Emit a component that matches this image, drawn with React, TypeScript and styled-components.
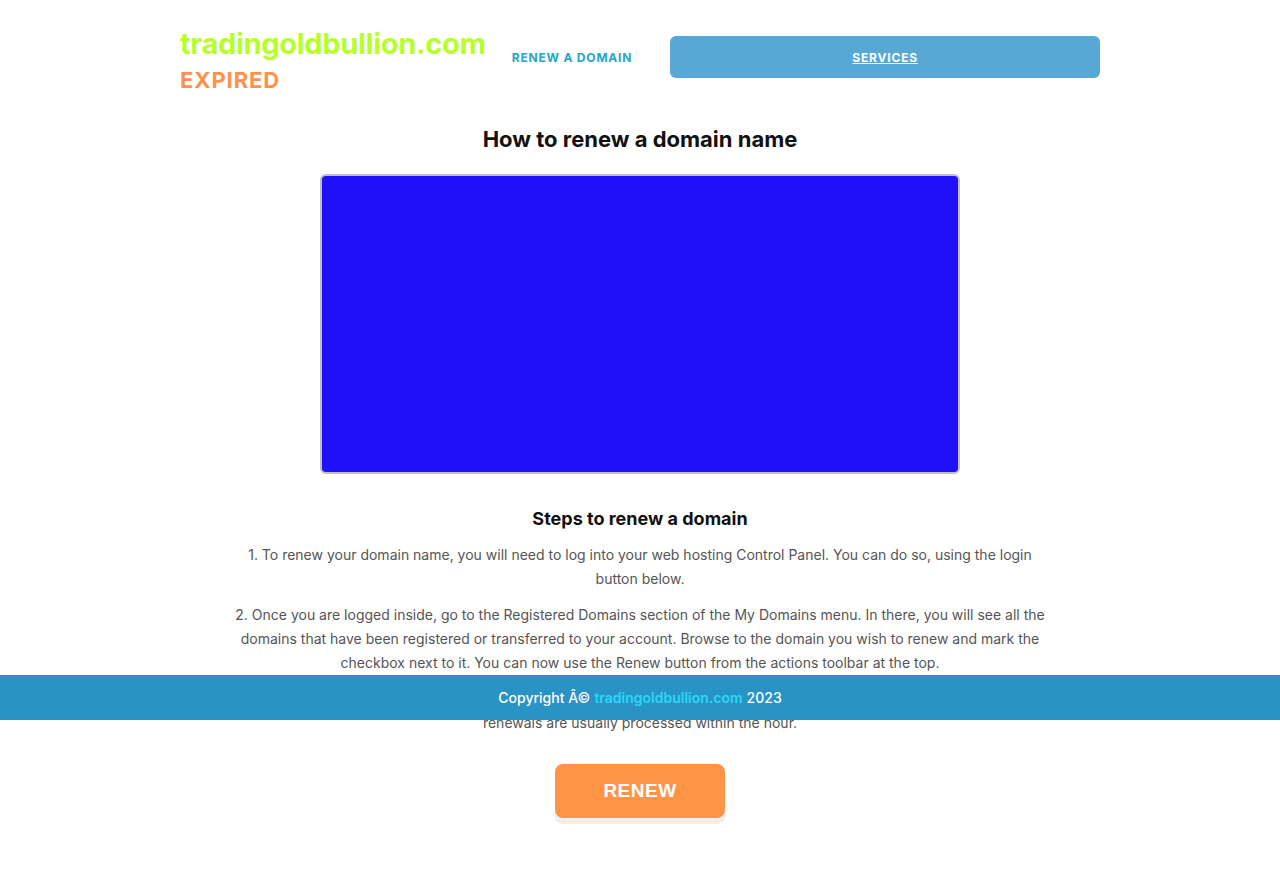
import * as React from "react";
import styled, { createGlobalStyle } from "styled-components";

const GlobalStyles = createGlobalStyle`
  html, body {
    margin: 0;
    padding: 0;
    background: #fff;
    font-family: Inter, "Liberation Sans", sans-serif;
  }
`;

const Page = styled.div`
  position: relative;
  min-height: 888px;
`;

const Header = styled.header`
  width: 920px;
  margin: 0 auto;
  padding-top: 26px;
  display: flex;
  align-items: flex-start;
`;

const Brand = styled.div`
  display: flex;
  flex-direction: column;
`;

const SiteName = styled.div`
  font-size: 29px;
  line-height: 36px;
  font-weight: 700;
  color: #b6ff2c;
  letter-spacing: -0.3px;
`;

const Expired = styled.div`
  margin-top: 4px;
  font-size: 22px;
  line-height: 28px;
  font-weight: 700;
  color: #ff914d;
  letter-spacing: 0.9px;
`;

const Nav = styled.nav`
  flex: 1;
  display: flex;
  align-items: center;
  margin-left: 26px;
  padding-top: 10px;
  gap: 38px;
`;

const NavLink = styled.a<{ $button?: boolean }>`
  display: flex;
  align-items: center;
  justify-content: center;
  height: 42px;
  font-size: 12px;
  font-weight: 700;
  letter-spacing: 0.8px;
  text-transform: uppercase;
  color: ${(p) => (p.$button ? "#fff" : "#24a6c9")};
  text-decoration: ${(p) => (p.$button ? "underline" : "none")};
  background: ${(p) => (p.$button ? "#57a8d5" : "transparent")};
  border-radius: 6px;
  flex: ${(p) => (p.$button ? 1 : "none")};
`;

const Main = styled.main`
  width: 820px;
  margin: 0 auto;
  display: flex;
  flex-direction: column;
  align-items: center;
  text-align: center;
`;

const Title = styled.h1`
  margin: 30px 0 0;
  font-size: 22px;
  line-height: 30px;
  font-weight: 700;
  color: #111;
`;

const Video = styled.div`
  margin-top: 20px;
  width: 636px;
  height: 296px;
  background: #1f10f9;
  border: 2px solid #bdbdbd;
  border-radius: 6px;
`;

const StepsTitle = styled.h2`
  margin: 33px 0 0;
  font-size: 18px;
  line-height: 24px;
  font-weight: 700;
  color: #111;
`;

const Para = styled.p`
  margin: 12px 0 0;
  font-size: 14px;
  line-height: 24px;
  color: #555;
`;

const RenewButton = styled.button`
  margin-top: 29px;
  width: 170px;
  height: 54px;
  border: none;
  border-radius: 8px;
  background: #ff9447;
  color: #fff;
  font-family: "Liberation Sans", Arial, sans-serif;
  font-size: 19px;
  font-weight: 700;
  letter-spacing: 0.5px;
  box-shadow: 0 6px 0 #efefef;
  cursor: pointer;
`;

const Footer = styled.footer`
  position: absolute;
  left: 0;
  right: 0;
  top: 675px;
  height: 45px;
  background: #2a93c5;
  display: flex;
  align-items: center;
  justify-content: center;
  font-size: 14px;
  font-weight: 500;
  color: #fff;
`;

const FooterLink = styled.a`
  color: #2bd6f7;
  font-weight: 600;
  text-decoration: none;
  margin: 0 4px;
`;

export default function App() {
  return (
    <Page>
      <GlobalStyles />
      <Header>
        <Brand>
          <SiteName>tradingoldbullion.com</SiteName>
          <Expired>EXPIRED</Expired>
        </Brand>
        <Nav>
          <NavLink>Renew a domain</NavLink>
          <NavLink $button>Services</NavLink>
        </Nav>
      </Header>
      <Main>
        <Title>How to renew a domain name</Title>
        <Video />
        <StepsTitle>Steps to renew a domain</StepsTitle>
        <Para>
          1. To renew your domain name, you will need to log into your web hosting Control Panel. You can
          do so, using the login button below.
        </Para>
        <Para>
          2. Once you are logged inside, go to the Registered Domains section of the My Domains menu. In
          there, you will see all the domains that have been registered or transferred to your account.
          Browse to the domain you wish to renew and mark the checkbox next to it. You can now use the
          Renew button from the actions toolbar at the top.
        </Para>
        <Para>
          3. Follow the on-screen instructions to complete the renewal and pay for it. Domain
          <br />
          renewals are usually processed within the hour.
        </Para>
        <RenewButton>RENEW</RenewButton>
      </Main>
      <Footer>
        Copyright Â©<FooterLink>tradingoldbullion.com</FooterLink>2023
      </Footer>
    </Page>
  );
}
